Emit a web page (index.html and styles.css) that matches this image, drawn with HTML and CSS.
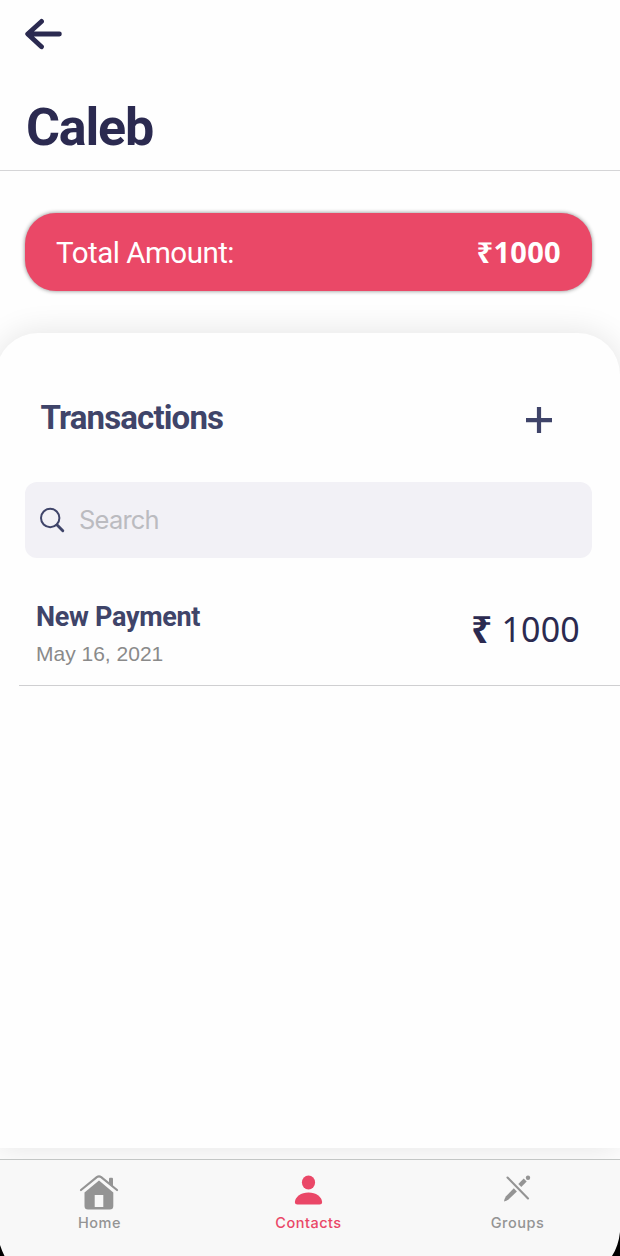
FILE: index.html
```html
<!DOCTYPE html>
<html lang="en">
<head>
<meta charset="utf-8">
<title>Caleb</title>
<link rel="stylesheet" href="styles.css">
</head>
<body>
<div class="screen">
  <header class="header">
    <svg class="back" width="38" height="32" viewBox="0 0 38 32" fill="none" stroke="#2b2a50" stroke-width="4.8" stroke-linecap="round" stroke-linejoin="round"><path d="M34.400 16H4M16.500 3.400L2.700 16L16.500 28.800"/></svg>
    <h1 class="title"><span>Caleb</span></h1>
  </header>
  <section class="total">
    <span class="total-label">Total Amount:</span>
    <span class="total-value">₹1000</span>
  </section>
  <main class="panel">
    <div class="panel-head">
      <h2 class="panel-title">Transactions</h2>
      <svg width="26" height="26" viewBox="0 0 26 26" stroke="#3f4469" stroke-width="4.2"><path d="M0 13.2H26M13 0V26"/></svg>
    </div>
    <div class="search">
      <svg width="26" height="26" viewBox="0 0 26 26" fill="none" stroke="#3f4469" stroke-linecap="round"><circle cx="11.200" cy="11" r="9.2" stroke-width="2"/><path d="M18.100 18L23.800 23.700" stroke-width="2.9"/></svg>
      <span class="placeholder">Search</span>
    </div>
    <div class="row">
      <div class="row-text">
        <div class="name">New Payment</div>
        <div class="date">May 16, 2021</div>
      </div>
      <div class="amount"><b>₹</b><span>1000</span></div>
    </div>
  </main>
  <nav class="tabs">
    <div class="tab">
      <svg width="40" height="38" viewBox="0 0 40 38" fill="#949494"><path d="M5.500 17.500L20 5.500L34.300 17.500V31Q34.300 34.500 30.800 34.500H9Q5.500 34.500 5.500 31Z"/><path d="M2 15L17.800 2.200Q20 .700 22.200 2.200L38 15" fill="none" stroke="#f8f8f8" stroke-width="5"/><path d="M30 3.500Q30 2.800 31 2.800H33Q34 2.800 34 3.800V11.500L30 8Z"/><path d="M2 15L17.800 2.200Q20 .700 22.200 2.200L38 15" fill="none" stroke="#949494" stroke-width="2.200" stroke-linecap="round"/><path fill="#f8f8f8" d="M15.700 20H24.300V32H15.700Z"/></svg>
      <span>Home</span>
    </div>
    <div class="tab active">
      <svg width="40" height="38" viewBox="0 0 40 38" fill="#ea4767"><ellipse cx="20.500" cy="7.500" rx="6.600" ry="7.100"/><path d="M9.500 29.500Q6.900 29.500 6.900 27C7.300 21.500 13 17.400 20.500 17.400S33.700 21.500 34.100 27Q34.100 29.500 31.500 29.500Z"/></svg>
      <span>Contacts</span>
    </div>
    <div class="tab">
      <svg width="40" height="38" viewBox="0 0 40 38" fill="none" stroke="#949494" stroke-linecap="round"><path d="M10.500 2.500L31 23.500" stroke-width="2.100"/><path d="M22.800 10.400L28.200 5" stroke-width="4.200" stroke-linecap="butt"/><circle cx="31" cy="2.800" r="2.200" fill="#949494" stroke="none"/><path d="M16.800 13.300L19.900 16.400L11.500 24.500Q9.500 26.100 7 26.500Q7.200 24 9 21.300Z" fill="#949494" stroke="none"/></svg>
      <span>Groups</span>
    </div>
  </nav>
  <svg class="corners" width="620" height="26" viewBox="0 0 620 26"><path d="M0 15Q2 21 4.500 26H0ZM620 2Q618.500 16 612 26H620Z"/></svg>
</div>
</body>
</html>
```
FILE: styles.css
```css
* { box-sizing: border-box; }
body { margin: 0; background: #fff; font-family: Roboto, "Noto Sans", sans-serif; }
.screen { position: relative; width: 620px; height: 1256px; overflow: hidden; display: flex; flex-direction: column; background: #fefefe; }
.header { height: 171px; flex: none; padding: 18px 25px 0; border-bottom: 1px solid #d5d5d7; }
.back { display: block; }
.title { margin: 43px 0 0 1px; font-size: 52px; line-height: 70px; font-weight: 700; color: #2b2a50; letter-spacing: -1.2px; }
.total { flex: none; height: 78px; margin: 42px 28px 42px 25px; padding: 1px 31px 0; display: flex; align-items: center; justify-content: space-between; background: #ea4867; color: #fff; border-radius: 31px; box-shadow: 0 0 4px rgba(0,0,0,.48); font-size: 29.500px; letter-spacing: -.5px; }
.total-value { margin-top: -2px; font-family: "Noto Sans", sans-serif; font-weight: 700; font-size: 29px; letter-spacing: .3px; }
.panel { flex: none; height: 815px; margin-left: -4px; padding: 52px 0 0 4px; border-radius: 42px 42px 0 0; background: #fefefe; box-shadow: 0 0 32px rgba(0,0,0,.11); }
.panel-head { height: 66px; padding: 0 68px 0 40px; display: flex; align-items: center; justify-content: space-between; }
.panel-title { margin: 0 0 0 .5px; font-size: 33px; line-height: 66px; color: #3f4469; letter-spacing: -.85px; }
.panel-head svg { margin-top: 4px; }
.search { height: 76px; margin: 31px 28px 0 25px; padding-left: 14px; display: flex; align-items: center; gap: 14px; border-radius: 12px; background: #f2f1f6; }
.placeholder { margin-top: -1px; font: 25.500px "Inter", "Liberation Sans", sans-serif; color: #bbbbc0; letter-spacing: -.8px; }
.row { height: 128px; margin-left: 19px; padding: 39px 40px 0 17px; display: flex; justify-content: space-between; border-bottom: 1px solid #cfcfd1; }
.name { font-size: 27px; line-height: 40px; font-weight: 700; color: #3f4469; letter-spacing: -.3px; }
.date { font: 21px/34px "Liberation Sans", Arial, sans-serif; color: #8a8a8a; }
.amount { display: flex; gap: 9px; font-family: "Noto Sans", sans-serif; font-size: 34px; line-height: 64px; color: #2b2a50; letter-spacing: .2px; }
.amount b { font-size: 37px; }
.tabs { flex: 1; margin-top: 11px; padding: 15px 0 0; display: flex; background: #f8f8f8; border-top: 1px solid #c3c6c5; position: relative; }
.tab { width: 209px; flex: none; display: flex; flex-direction: column; align-items: center; color: #949494; font: 500 14.500px/20px "Inter", sans-serif; letter-spacing: .5px; }
.tab svg { margin-right: 2px; }
.tab:first-child { margin-left: -5px; }
.active { color: #ea4767; }
.corners { position: absolute; left: 0; bottom: 0; }
```
